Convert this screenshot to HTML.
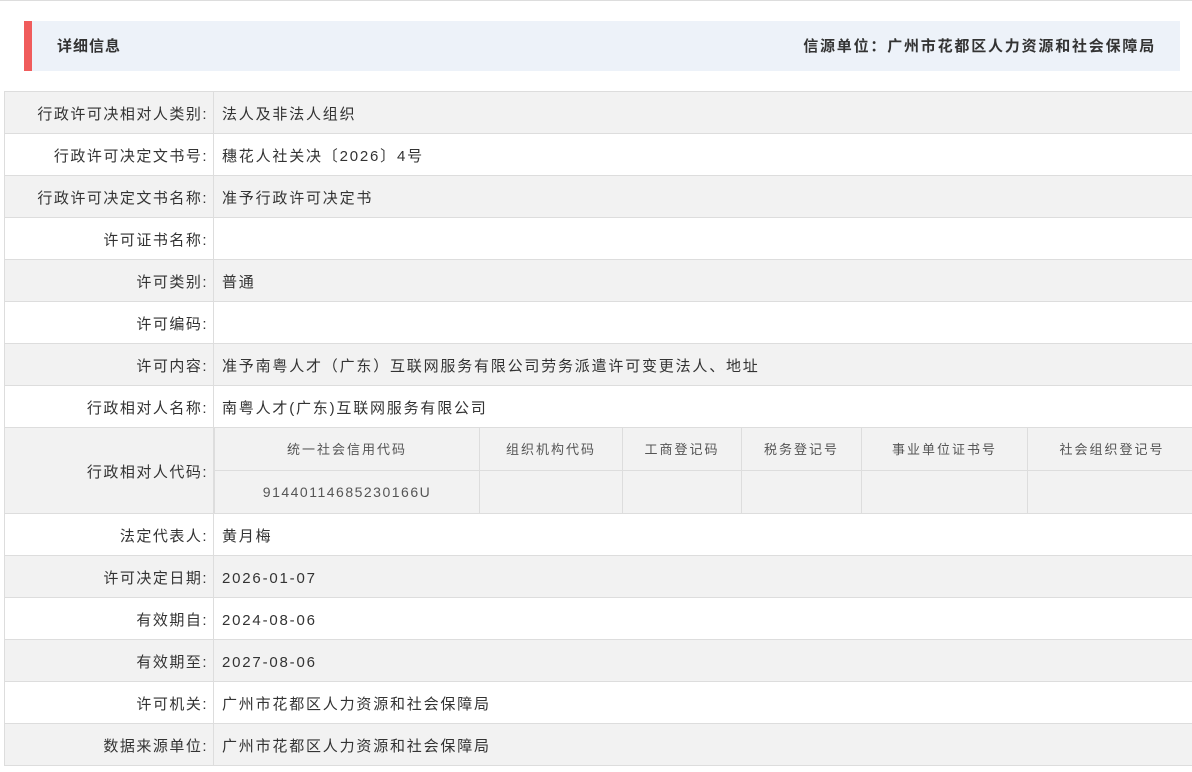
<!DOCTYPE html>
<html><head><meta charset="utf-8"><style>
*{margin:0;padding:0;box-sizing:border-box}
body{width:1192px;height:772px;background:#fff;font-family:"Liberation Sans","Noto Sans CJK SC",sans-serif;color:#333;position:relative;overflow:hidden}
.top{position:absolute;left:0;top:0;width:1192px;height:1px;background:#ddd}
.hd{position:absolute;left:24px;top:21px;width:1156px;height:50px;background:#edf2f9;border-left:8px solid #f05c5c;font-size:15px;font-weight:bold;line-height:52px;letter-spacing:1.8px}
.hd .l{position:absolute;left:25px;letter-spacing:1px}
.hd .r{position:absolute;right:24px}
.row{position:absolute;left:4px;width:1190px;height:43px;border:1px solid #ddd;font-size:15px;line-height:45px;letter-spacing:1.8px}
.g{background:#f2f2f2}
.lab{position:absolute;left:0;width:209px;text-align:right;padding-right:5px;height:100%;border-right:1px solid #ddd;letter-spacing:1.5px}
.val{position:absolute;left:217px}
.in{position:absolute;left:209px;top:0;width:981px;height:85px;border-left:1px solid #ddd;font-size:13px;color:#555;letter-spacing:2px}
.c{position:absolute;text-align:center;height:43px;line-height:44px;border-right:1px solid #ddd}
.r1{top:0;border-bottom:1px solid #ddd}.r2{top:43px;line-height:42px;height:42px}
</style></head><body>
<div class="top"></div>
<div class="hd"><span class="l">详细信息</span><span class="r">信源单位：广州市花都区人力资源和社会保障局</span></div>

<div class="row g" style="top:91px"><div class="lab">行政许可决相对人类别:</div><div class="val">法人及非法人组织</div></div>
<div class="row" style="top:133px"><div class="lab">行政许可决定文书号:</div><div class="val">穗花人社关决〔2026〕4号</div></div>
<div class="row g" style="top:175px"><div class="lab">行政许可决定文书名称:</div><div class="val">准予行政许可决定书</div></div>
<div class="row" style="top:217px"><div class="lab">许可证书名称:</div><div class="val"></div></div>
<div class="row g" style="top:259px"><div class="lab">许可类别:</div><div class="val">普通</div></div>
<div class="row" style="top:301px"><div class="lab">许可编码:</div><div class="val"></div></div>
<div class="row g" style="top:343px"><div class="lab">许可内容:</div><div class="val">准予南粤人才（广东）互联网服务有限公司劳务派遣许可变更法人、地址</div></div>
<div class="row" style="top:385px"><div class="lab">行政相对人名称:</div><div class="val">南粤人才(广东)互联网服务有限公司</div></div>
<div class="row g" style="top:427px;height:87px;line-height:89px"><div class="lab">行政相对人代码:</div>
<div class="in">
<div class="c r1" style="left:0;width:265px">统一社会信用代码</div>
<div class="c r1" style="left:265px;width:143px">组织机构代码</div>
<div class="c r1" style="left:408px;width:119px">工商登记码</div>
<div class="c r1" style="left:527px;width:120px">税务登记号</div>
<div class="c r1" style="left:647px;width:166px">事业单位证书号</div>
<div class="c r1" style="left:813px;width:168px;border-right:none">社会组织登记号</div>
<div class="c r2" style="left:0;width:265px;font-size:14px;letter-spacing:1.5px">91440114685230166U</div>
<div class="c r2" style="left:265px;width:143px"></div>
<div class="c r2" style="left:408px;width:119px"></div>
<div class="c r2" style="left:527px;width:120px"></div>
<div class="c r2" style="left:647px;width:166px"></div>
</div></div>
<div class="row" style="top:513px"><div class="lab">法定代表人:</div><div class="val">黄月梅</div></div>
<div class="row g" style="top:555px"><div class="lab">许可决定日期:</div><div class="val">2026-01-07</div></div>
<div class="row" style="top:597px"><div class="lab">有效期自:</div><div class="val">2024-08-06</div></div>
<div class="row g" style="top:639px"><div class="lab">有效期至:</div><div class="val">2027-08-06</div></div>
<div class="row" style="top:681px"><div class="lab">许可机关:</div><div class="val">广州市花都区人力资源和社会保障局</div></div>
<div class="row g" style="top:723px"><div class="lab">数据来源单位:</div><div class="val">广州市花都区人力资源和社会保障局</div></div>
</body></html>
